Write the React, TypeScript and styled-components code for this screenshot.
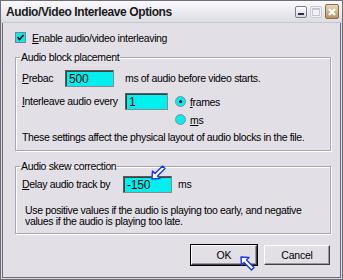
import React from 'react';
import styled, { createGlobalStyle } from 'styled-components';

const uiFont = `'Liberation Sans', Arial, sans-serif`;

const GlobalStyle = createGlobalStyle`
  html, body {
    margin: 0;
    padding: 0;
    background: #ffffff;
  }
  body {
    font-family: ${uiFont};
    font-size: 10.5px;
    letter-spacing: -0.35px;
    color: #000;
  }
`;

const Window = styled.div`
  position: relative;
  width: 343px;
  height: 280px;
  box-sizing: border-box;
  display: flex;
  flex-direction: column;
  background: #e3dfe6;
  border: 1px solid #6f6d7c;
  box-shadow: inset 0 0 0 1px #d8d5de, inset 0 0 0 2px #6f6d7c;
  overflow: hidden;
`;

const TitleBar = styled.div`
  height: 21px;
  display: flex;
  align-items: center;
  justify-content: space-between;
  padding: 0 3px 0 5px;
  background: linear-gradient(#fbfbfc, #e8e8ee 60%, #dcdce3);
  border-bottom: 1px solid #c8c6d0;
`;

const Title = styled.span`
  font-size: 12px;
  font-weight: bold;
  color: #1a1a1a;
  letter-spacing: -0.4px;
`;

const Caption = styled.div`
  display: flex;
  gap: 3px;
  align-items: center;
`;

const CapButton = styled.div<{ $kind: 'min' | 'max' | 'close' }>`
  width: ${(p) => (p.$kind === 'close' ? '14px' : '12px')};
  height: ${(p) => (p.$kind === 'close' ? '15px' : '12px')};
  box-sizing: border-box;
  display: flex;
  align-items: center;
  justify-content: center;
  border-radius: 2px;
  border: 1px solid ${(p) => (p.$kind === 'close' ? '#8a6d4a' : p.$kind === 'max' ? '#c9c9d4' : '#7a7c92')};
  background: ${(p) =>
    p.$kind === 'close'
      ? 'linear-gradient(#e9d8be, #b8915f)'
      : p.$kind === 'max'
      ? '#f2f2f6'
      : 'linear-gradient(#ffffff, #d4d5df)'};
`;

const Body = styled.div`
  flex: 1;
  display: flex;
  flex-direction: column;
  padding: 8px 11px 0 14px;
`;

const CheckRow = styled.label`
  display: flex;
  align-items: center;
  gap: 6px;
  height: 13px;
  margin-bottom: 7px;
`;

const CheckBox = styled.span`
  width: 9px;
  height: 9px;
  border: 1px solid #7c7f94;
  background: #00f0f0;
  display: flex;
  align-items: center;
  justify-content: center;
`;

const Group = styled.fieldset<{ $height: number }>`
  margin: 0;
  padding: 0 8px 0 6px;
  height: ${(p) => p.$height}px;
  box-sizing: border-box;
  border: 1px solid #a8a6b2;
  box-shadow: 1px 1px 0 #ffffff, inset 1px 1px 0 #ffffff;
  min-width: 0;
`;

const Legend = styled.legend`
  padding: 0 1px;
  margin-left: -2px;
  line-height: 12px;
`;

const Row = styled.div<{ $top: number }>`
  display: flex;
  align-items: flex-start;
  margin-top: ${(p) => p.$top}px;
`;

const Label = styled.span<{ $width?: number; $left?: number }>`
  width: ${(p) => (p.$width ? `${p.$width}px` : 'auto')};
  margin-left: ${(p) => p.$left ?? 0}px;
  line-height: 17px;
  white-space: nowrap;
`;

const Field = styled.div<{ $width: number }>`
  width: ${(p) => p.$width}px;
  height: 17px;
  box-sizing: border-box;
  background: #00f0f0;
  border: 1px solid #8a8a8a;
  border-top-color: #5a5a5a;
  border-left-color: #5a5a5a;
  box-shadow: inset 1px 1px 0 #404040;
  padding: 1px 0 0 3px;
  font-size: 12px;
  letter-spacing: -0.2px;
  line-height: 14px;
`;

const RadioStack = styled.div`
  display: flex;
  flex-direction: column;
  margin-left: 7px;
`;

const RadioRow = styled.div<{ $height: number }>`
  display: flex;
  align-items: center;
  gap: 4px;
  height: ${(p) => p.$height}px;
  margin-top: ${(p) => (p.$height === 17 ? 0 : 3)}px;
`;

const Radio = styled.span<{ $on?: boolean }>`
  width: 11px;
  height: 11px;
  box-sizing: border-box;
  border-radius: 50%;
  background: #00f0f0;
  border: 1px solid #8a8ca0;
  display: flex;
  align-items: center;
  justify-content: center;
  &::after {
    content: '';
    width: 3px;
    height: 3px;
    border-radius: 50%;
    background: ${(p) => (p.$on ? '#000' : 'transparent')};
  }
`;

const Note = styled.p<{ $top: number; $left: number }>`
  margin: ${(p) => p.$top}px 0 0 ${(p) => p.$left}px;
  line-height: 11px;
  white-space: nowrap;
`;

const U = styled.span`
  text-decoration: underline;
`;

const Gap = styled.div<{ $h: number }>`
  height: ${(p) => p.$h}px;
  flex: none;
`;

const ButtonRow = styled.div`
  display: flex;
  justify-content: flex-end;
  gap: 7px;
  padding-right: 1px;
`;

const Button = styled.button<{ $default?: boolean }>`
  width: 66px;
  height: 20px;
  box-sizing: border-box;
  font-family: ${uiFont};
  font-size: 10.5px;
  letter-spacing: -0.2px;
  color: #000;
  background: #e3dfe6;
  border: 1px solid;
  border-color: #ffffff #404040 #404040 #ffffff;
  box-shadow: ${(p) =>
    p.$default ? '0 0 0 1px #000, inset -1px -1px 0 #9a98a4' : 'inset -1px -1px 0 #9a98a4'};
  padding: 0;
`;

const Pointer = styled.svg<{ $x: number; $y: number }>`
  position: absolute;
  left: ${(p) => p.$x}px;
  top: ${(p) => p.$y}px;
`;

const Arrow = ({ x, y, down }: { x: number; y: number; down?: boolean }) => (
  <Pointer $x={x} $y={y} width="18" height="18" viewBox="0 0 18 18">
    <g transform={down ? 'translate(0 18) scale(1 -1)' : undefined}>
      <path
        d="M2 2 L10 2.5 L7.5 5 L15 12.5 L12.5 15 L5 7.5 L2.5 10 Z"
        fill="#ffffff"
        stroke="#1a3cf0"
        strokeWidth="1.5"
        strokeLinejoin="round"
      />
    </g>
  </Pointer>
);

const App = () => (
  <>
    <GlobalStyle />
    <Window>
      <TitleBar>
        <Title>Audio/Video Interleave Options</Title>
        <Caption>
          <CapButton $kind="min">
            <svg width="8" height="8" viewBox="0 0 8 8">
              <rect x="1" y="5" width="6" height="2" fill="#2a2c48" />
            </svg>
          </CapButton>
          <CapButton $kind="max">
            <svg width="8" height="8" viewBox="0 0 8 8">
              <rect x="0.5" y="0.5" width="7" height="7" fill="none" stroke="#c6c6d2" />
              <rect x="0.5" y="0.5" width="7" height="1.5" fill="#c6c6d2" />
            </svg>
          </CapButton>
          <CapButton $kind="close">
            <svg width="10" height="10" viewBox="0 0 10 10">
              <path d="M2 2 L8 8 M8 2 L2 8" stroke="#ffffff" strokeWidth="2.2" />
            </svg>
          </CapButton>
        </Caption>
      </TitleBar>
      <Body>
        <CheckRow>
          <CheckBox>
            <svg width="7" height="7" viewBox="0 0 7 7">
              <path d="M0.5 3 L2.5 5.5 L6.5 1" stroke="#000" strokeWidth="1.6" fill="none" />
            </svg>
          </CheckBox>
          <span>
            <U>E</U>nable audio/video interleaving
          </span>
        </CheckRow>

        <Group $height={100}>
          <Legend>Audio block placement</Legend>
          <Row $top={7}>
            <Label $width={43}>
              <U>P</U>rebac
            </Label>
            <Field $width={49}>500</Field>
            <Label $left={11}>ms of audio before video starts.</Label>
          </Row>
          <Row $top={6}>
            <Label $width={103}>
              <U>I</U>nterleave audio every
            </Label>
            <Field $width={43}>1</Field>
            <RadioStack>
              <RadioRow $height={17}>
                <Radio $on />
                <span>
                  <U>f</U>rames
                </span>
              </RadioRow>
              <RadioRow $height={13}>
                <Radio />
                <span>
                  <U>m</U>s
                </span>
              </RadioRow>
            </RadioStack>
          </Row>
          <Note $top={6} $left={0}>
            These settings affect the physical layout of audio blocks in the file.
          </Note>
        </Group>

        <Gap $h={9} />

        <Group $height={74}>
          <Legend>Audio skew correction</Legend>
          <Row $top={4}>
            <Label $width={101}>
              <U>D</U>elay audio track by
            </Label>
            <Field $width={49}>-150</Field>
            <Label $left={6}>ms</Label>
          </Row>
          <Note $top={12} $left={3}>
            Use positive values if the audio is playing too early, and negative
            <br />
            values if the audio is playing too late.
          </Note>
        </Group>

        <Gap $h={11} />

        <ButtonRow>
          <Button $default>OK</Button>
          <Button>Cancel</Button>
        </ButtonRow>
      </Body>
      <Arrow x={149} y={162} down />
      <Arrow x={238} y={254} />
    </Window>
  </>
);

export default App;
